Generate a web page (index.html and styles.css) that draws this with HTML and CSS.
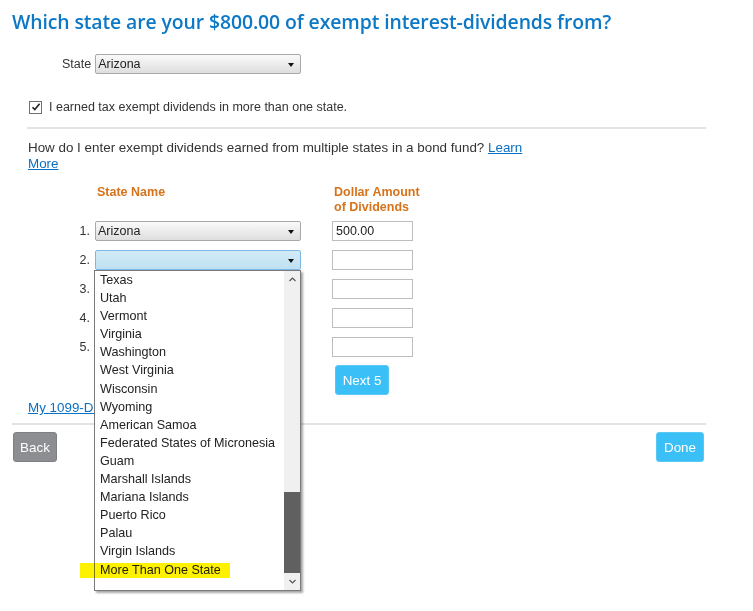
FILE: index.html
```html
<!DOCTYPE html>
<html>
<head>
<meta charset="utf-8">
<link rel="stylesheet" href="styles.css">
</head>
<body>
<div class="page">
  <h1 class="title">Which state are your $800.00 of exempt interest-dividends from?</h1>

  <div class="state-row">
    <span class="state-label">State</span>
    <div class="select"><span class="select-text">Arizona</span><span class="caret"></span></div>
  </div>

  <div class="check-row">
    <span class="checkbox"><svg width="10" height="10" viewBox="0 0 10 10"><path d="M1.5 5.2 L3.8 7.6 L8.6 1.8" fill="none" stroke="#222" stroke-width="1.6"/></svg></span>
    <span class="check-text">I earned tax exempt dividends in more than one state.</span>
  </div>

  <div class="sep"></div>

  <p class="help">How do I enter exempt dividends earned from multiple states in a bond fund? <a class="link" href="#">Learn More</a></p>

  <div class="grid">
    <div></div>
    <div class="head">State Name</div>
    <div class="head">Dollar Amount<br>of Dividends</div>

    <div class="num">1.</div>
    <div class="select"><span class="select-text">Arizona</span><span class="caret"></span></div>
    <div class="input">500.00</div>

    <div class="num">2.</div>
    <div class="select focus"><span class="select-text"></span><span class="caret"></span></div>
    <div class="input"></div>

    <div class="num">3.</div>
    <div class="select"><span class="select-text"></span><span class="caret"></span></div>
    <div class="input"></div>

    <div class="num">4.</div>
    <div class="select"><span class="select-text"></span><span class="caret"></span></div>
    <div class="input"></div>

    <div class="num">5.</div>
    <div class="select"><span class="select-text"></span><span class="caret"></span></div>
    <div class="input"></div>

    <div></div>
    <div></div>
    <div><button class="btn blue next">Next 5</button></div>
  </div>

  <div class="doc-link"><a class="link" href="#">My 1099-DIV</a></div>

  <div class="sep sep-bottom"></div>

  <div class="actions">
    <button class="btn grey">Back</button>
    <button class="btn blue">Done</button>
  </div>

  <div class="dropdown">
    <ul class="options">
      <li>Texas</li>
      <li>Utah</li>
      <li>Vermont</li>
      <li>Virginia</li>
      <li>Washington</li>
      <li>West Virginia</li>
      <li>Wisconsin</li>
      <li>Wyoming</li>
      <li>American Samoa</li>
      <li>Federated States of Micronesia</li>
      <li>Guam</li>
      <li>Marshall Islands</li>
      <li>Mariana Islands</li>
      <li>Puerto Rico</li>
      <li>Palau</li>
      <li>Virgin Islands</li>
      <li>More Than One State</li>
    </ul>
    <div class="scrollbar">
      <div class="arrow up"><svg width="7" height="5" viewBox="0 0 7 5"><path d="M0.5 4 L3.5 1 L6.5 4" fill="none" stroke="#555" stroke-width="1.2"/></svg></div>
      <div class="track"><div class="thumb"></div></div>
      <div class="arrow down"><svg width="7" height="5" viewBox="0 0 7 5"><path d="M0.5 1 L3.5 4 L6.5 1" fill="none" stroke="#555" stroke-width="1.2"/></svg></div>
    </div>
  </div>
  <div class="highlight"></div>
</div>
</body>
</html>
```

FILE: styles.css
```css
* { box-sizing: border-box; }
html, body { margin: 0; padding: 0; background: #fff; }
body {
  font-family: "Liberation Sans", Arial, sans-serif;
  font-size: 12.5px;
  color: #333;
}
.page {
  position: relative;
  width: 753px;
  height: 611px;
  overflow: hidden;
}
.title {
  margin: 10px 0 0 12px;
  font-family: "Open Sans", sans-serif;
  font-weight: 600;
  font-size: 19.4px;
  line-height: 24px;
  color: #0d78c5;
  letter-spacing: -0.1px;
}
.state-row {
  display: flex;
  align-items: center;
  gap: 4px;
  margin: 20px 0 0 62px;
  height: 20px;
}
.select {
  position: relative;
  width: 206px;
  height: 20px;
  border: 1px solid #a9a9a9;
  border-radius: 2px;
  background: linear-gradient(#fafafa, #dedede);
  display: flex;
  align-items: center;
}
.select.focus {
  border-color: #7db7e8;
  background: linear-gradient(#d2ebf7, #bfe0f1);
}
.select-text {
  padding-left: 2px;
  color: #222;
}
.caret {
  position: absolute;
  right: 6px;
  top: 8px;
  width: 0;
  height: 0;
  border-left: 3.5px solid transparent;
  border-right: 3.5px solid transparent;
  border-top: 4px solid #111;
}
.check-row {
  display: flex;
  align-items: center;
  gap: 7px;
  margin: 23px 0 0 29px;
  height: 20px;
}
.checkbox {
  width: 13px;
  height: 13px;
  border: 1px solid #707070;
  background: #fff;
  display: flex;
  align-items: center;
  justify-content: center;
}
.sep {
  height: 2px;
  background: #e3e3e3;
  margin: 10px 47px 0 27px;
}
.help {
  margin: 11px 0 0 28px;
  width: 505px;
  font-size: 13.4px;
  line-height: 16px;
  color: #333;
}
.link {
  color: #0a70c4;
  text-decoration: underline;
}
.grid {
  display: grid;
  grid-template-columns: 21px 210px 112px;
  row-gap: 9px;
  margin: 13px 0 0 70px;
}
.grid > :nth-child(3n+2) { margin-left: 4px; }
.grid > :nth-child(3n) { margin-left: 31px; }
.head {
  font-weight: bold;
  color: #d5741c;
  line-height: 15px;
  padding-left: 2px;
  margin-bottom: -3px;
  white-space: nowrap;
}
.num {
  text-align: right;
  line-height: 20px;
  padding-right: 1px;
}
.input {
  width: 81px;
  height: 20px;
  border: 1px solid #bdbdbd;
  background: #fff;
  line-height: 18px;
  padding-left: 3px;
  color: #222;
}
.btn {
  font-family: "Liberation Sans", Arial, sans-serif;
  font-size: 13.4px;
  color: #fff;
  border: 1px solid transparent;
  border-radius: 3px;
  height: 30px;
  padding: 0;
  cursor: pointer;
}
.btn.blue { background: #3bbff7; border-color: #5ac8f5; }
.btn.grey { background: #8c8e91; border-color: #7e8083; }
.next { margin: -1px 0 0 3px; width: 54px; }
.doc-link {
  margin: 5px 0 0 28px;
  font-size: 13.4px;
  line-height: 16px;
}
.sep-bottom { margin: 7px 47px 0 12px; }
.actions {
  display: flex;
  justify-content: space-between;
  margin: 7px 49px 0 13px;
}
.actions .grey { width: 44px; }
.actions .blue { width: 48px; }
.dropdown {
  position: absolute;
  left: 94px;
  top: 270px;
  width: 207px;
  height: 321px;
  border: 1px solid #7a7a7a;
  background: #fff;
  box-shadow: 2px 2px 2px rgba(0,0,0,0.35);
  display: flex;
}
.options {
  list-style: none;
  margin: 0;
  padding: 0 0 0 5px;
  flex: 1;
  font-size: 12.6px;
  line-height: 18.1px;
  color: #222;
}
.scrollbar {
  width: 16px;
  background: #f0f0f0;
  display: flex;
  flex-direction: column;
}
.arrow {
  height: 17px;
  display: flex;
  align-items: center;
  justify-content: center;
}
.track {
  flex: 1;
  display: flex;
  flex-direction: column;
  justify-content: flex-end;
}
.thumb {
  height: 81px;
  background: #606060;
}
.highlight {
  position: absolute;
  left: 80px;
  top: 563px;
  width: 150px;
  height: 15px;
  background: #fff200;
  mix-blend-mode: multiply;
}
```
